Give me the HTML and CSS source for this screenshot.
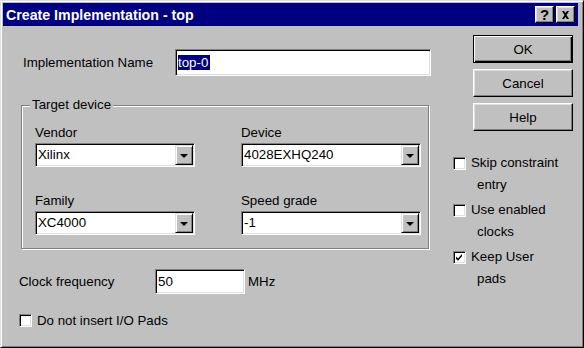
FILE: index.html
```html
<!DOCTYPE html>
<html>
<head>
<meta charset="utf-8">
<title>Create Implementation - top</title>
<link rel="stylesheet" href="styles.css">
</head>
<body>
<div class="window">
  <div class="titlebar">
    <span class="title">Create Implementation - top</span>
    <span class="tbtn help-glyph">?</span>
    <span class="tbtn close">
      <svg width="9" height="8" viewBox="0 0 9 8"><path d="M1 0h2l1.5 2L6 0h2L5.5 4 8 8H6L4.5 6 3 8H1l2.5-4z" fill="#000"/></svg>
    </span>
  </div>
  <div class="body">
    <div class="main">
      <div class="name-row">
        <span class="name-label">Implementation Name</span>
        <div class="field name-field"><span class="sel">top-0</span></div>
      </div>
      <div class="group">
        <span class="legend">Target device</span>
        <div class="group-grid">
          <div class="cell">
            <div class="lbl">Vendor</div>
            <div class="combo combo-a"><span class="value">Xilinx</span><span class="drop"><span class="arrow"></span></span></div>
          </div>
          <div class="cell">
            <div class="lbl">Device</div>
            <div class="combo combo-b"><span class="value">4028EXHQ240</span><span class="drop"><span class="arrow"></span></span></div>
          </div>
          <div class="cell">
            <div class="lbl">Family</div>
            <div class="combo combo-a"><span class="value">XC4000</span><span class="drop"><span class="arrow"></span></span></div>
          </div>
          <div class="cell">
            <div class="lbl">Speed grade</div>
            <div class="combo combo-b"><span class="value">-1</span><span class="drop"><span class="arrow"></span></span></div>
          </div>
        </div>
      </div>
      <div class="clock-row">
        <span class="clock-label">Clock frequency</span>
        <div class="field clock-field">50</div>
        <span class="unit">MHz</span>
      </div>
      <div class="io-row">
        <span class="box"></span>
        <span class="io-label">Do not insert I/O Pads</span>
      </div>
    </div>
    <div class="side">
      <div class="btn default">OK</div>
      <div class="btn">Cancel</div>
      <div class="btn">Help</div>
      <div class="checks">
        <div class="check">
          <span class="box"></span>
          <span class="l1">Skip constraint</span>
          <span class="l2">entry</span>
        </div>
        <div class="check">
          <span class="box"></span>
          <span class="l1">Use enabled</span>
          <span class="l2">clocks</span>
        </div>
        <div class="check">
          <span class="box checked"><svg width="9" height="9" viewBox="0 0 9 9"><path d="M1 3.5l2 2 4-4.5v2.2l-4 4.5-2-2z" fill="#000"/></svg></span>
          <span class="l1">Keep User</span>
          <span class="l2">pads</span>
        </div>
      </div>
    </div>
  </div>
</div>
</body>
</html>
```
FILE: styles.css
```css
html, body {
  margin: 0;
  padding: 0;
  background: #c0c0c0;
}
body {
  font-family: "Liberation Sans", Arial, sans-serif;
  font-size: 13.3px;
  color: #000;
}
.window {
  width: 584px;
  height: 348px;
  box-sizing: border-box;
  border: 1px solid;
  border-color: #dfdfdf #000 #000 #dfdfdf;
  box-shadow: inset 1px 1px 0 #fff, inset -1px -1px 0 #808080;
  padding: 2px;
  display: flex;
  flex-direction: column;
  background: #c0c0c0;
}
.titlebar {
  height: 23px;
  margin-right: 3px;
  background: #000080;
  color: #fff;
  display: flex;
  align-items: center;
  padding: 0 3px;
  flex: none;
}
.title {
  font-weight: bold;
  font-size: 14.2px;
  flex: 1;
  white-space: nowrap;
}
.tbtn {
  width: 19px;
  height: 17px;
  box-sizing: border-box;
  background: #c0c0c0;
  border: 1px solid;
  border-color: #fff #000 #000 #fff;
  box-shadow: inset -1px -1px 0 #808080, inset 1px 1px 0 #dfdfdf;
  display: flex;
  align-items: center;
  justify-content: center;
  color: #000;
}
.help-glyph {
  font-weight: bold;
  font-size: 15px;
  line-height: 15px;
}
.close {
  margin-left: 2px;
}
.body {
  flex: 1;
  display: flex;
}
.main {
  width: 440px;
  flex: none;
}
.name-row {
  margin-top: 23px;
  display: flex;
  align-items: center;
  padding-left: 20px;
}
.name-label {
  width: 152px;
  flex: none;
}
.field {
  box-sizing: border-box;
  background: #fff;
  border: 1px solid;
  border-color: #808080 #fff #fff #808080;
  box-shadow: inset 1px 1px 0 #000, inset -1px -1px 0 #dfdfdf;
  padding: 1px 1px 1px 2px;
  display: flex;
  align-items: center;
}
.name-field {
  width: 256px;
  height: 27px;
  padding-left: 2px;
}
.sel {
  background: #000080;
  color: #fff;
  line-height: 15px;
  padding: 0 2px 0 0;
}
.group {
  position: relative;
  margin: 29px 0 0 18px;
  width: 408px;
  height: 144px;
  box-sizing: border-box;
  border: 1px solid #808080;
  box-shadow: inset 1px 1px 0 #fff, 1px 1px 0 #fff;
  padding: 18px 0 0 13px;
}
.legend {
  position: absolute;
  top: -9px;
  left: 8px;
  padding: 0 2px;
  line-height: 16px;
  background: #c0c0c0;
}
.group-grid {
  display: grid;
  grid-template-columns: 160px 180px;
  column-gap: 46px;
  row-gap: 25px;
}
.lbl {
  line-height: 17px;
  margin-bottom: 2px;
}
.combo {
  height: 24px;
  box-sizing: border-box;
  background: #fff;
  border: 1px solid;
  border-color: #808080 #fff #fff #808080;
  box-shadow: inset 1px 1px 0 #000, inset -1px -1px 0 #dfdfdf;
  padding: 1px;
  display: flex;
}
.value {
  flex: 1;
  line-height: 20px;
  padding-left: 1px;
}
.drop {
  width: 18px;
  height: 20px;
  box-sizing: border-box;
  background: #c0c0c0;
  border: 1px solid;
  border-color: #dfdfdf #000 #000 #dfdfdf;
  box-shadow: inset 1px 1px 0 #fff, inset -1px -1px 0 #808080;
  display: flex;
  align-items: center;
  justify-content: center;
}
.arrow {
  width: 0;
  height: 0;
  border-left: 4px solid transparent;
  border-right: 4px solid transparent;
  border-top: 4px solid #000;
  margin-top: 1px;
}
.clock-row {
  margin-top: 20px;
  padding-left: 16px;
  display: flex;
  align-items: center;
}
.clock-label {
  width: 136px;
  flex: none;
}
.clock-field {
  width: 90px;
  height: 25px;
  padding-left: 2px;
}
.unit {
  margin-left: 3px;
}
.io-row {
  margin-top: 18px;
  height: 16px;
  padding-left: 16px;
  display: flex;
  align-items: center;
}
.box {
  width: 13px;
  height: 13px;
  box-sizing: border-box;
  background: #fff;
  border: 1px solid;
  border-color: #808080 #fff #fff #808080;
  box-shadow: inset 1px 1px 0 #000, inset -1px -1px 0 #dfdfdf;
  display: flex;
  align-items: center;
  justify-content: center;
  flex: none;
}
.io-label {
  margin-left: 5px;
}
.side {
  flex: 1;
  display: flex;
  flex-direction: column;
  padding: 9px 0 0 10px;
}
.btn {
  margin-left: 20px;
  width: 100px;
  height: 28px;
  box-sizing: border-box;
  background: #c0c0c0;
  border: 1px solid;
  border-color: #fff #000 #000 #fff;
  box-shadow: inset -1px -1px 0 #808080, inset 1px 1px 0 #dfdfdf;
  display: flex;
  align-items: center;
  justify-content: center;
  margin-bottom: 6px;
}
.btn.default {
  border-color: #000;
  box-shadow: inset 1px 1px 0 #fff, inset -1px -1px 0 #000, inset -2px -2px 0 #808080;
}
.checks {
  margin-top: 15px;
}
.check {
  display: grid;
  grid-template-columns: 13px auto;
  column-gap: 5px;
  line-height: 22px;
  align-items: center;
  margin-bottom: 3px;
}
.check .l2 {
  grid-column: 2;
  padding-left: 6px;
}
```
